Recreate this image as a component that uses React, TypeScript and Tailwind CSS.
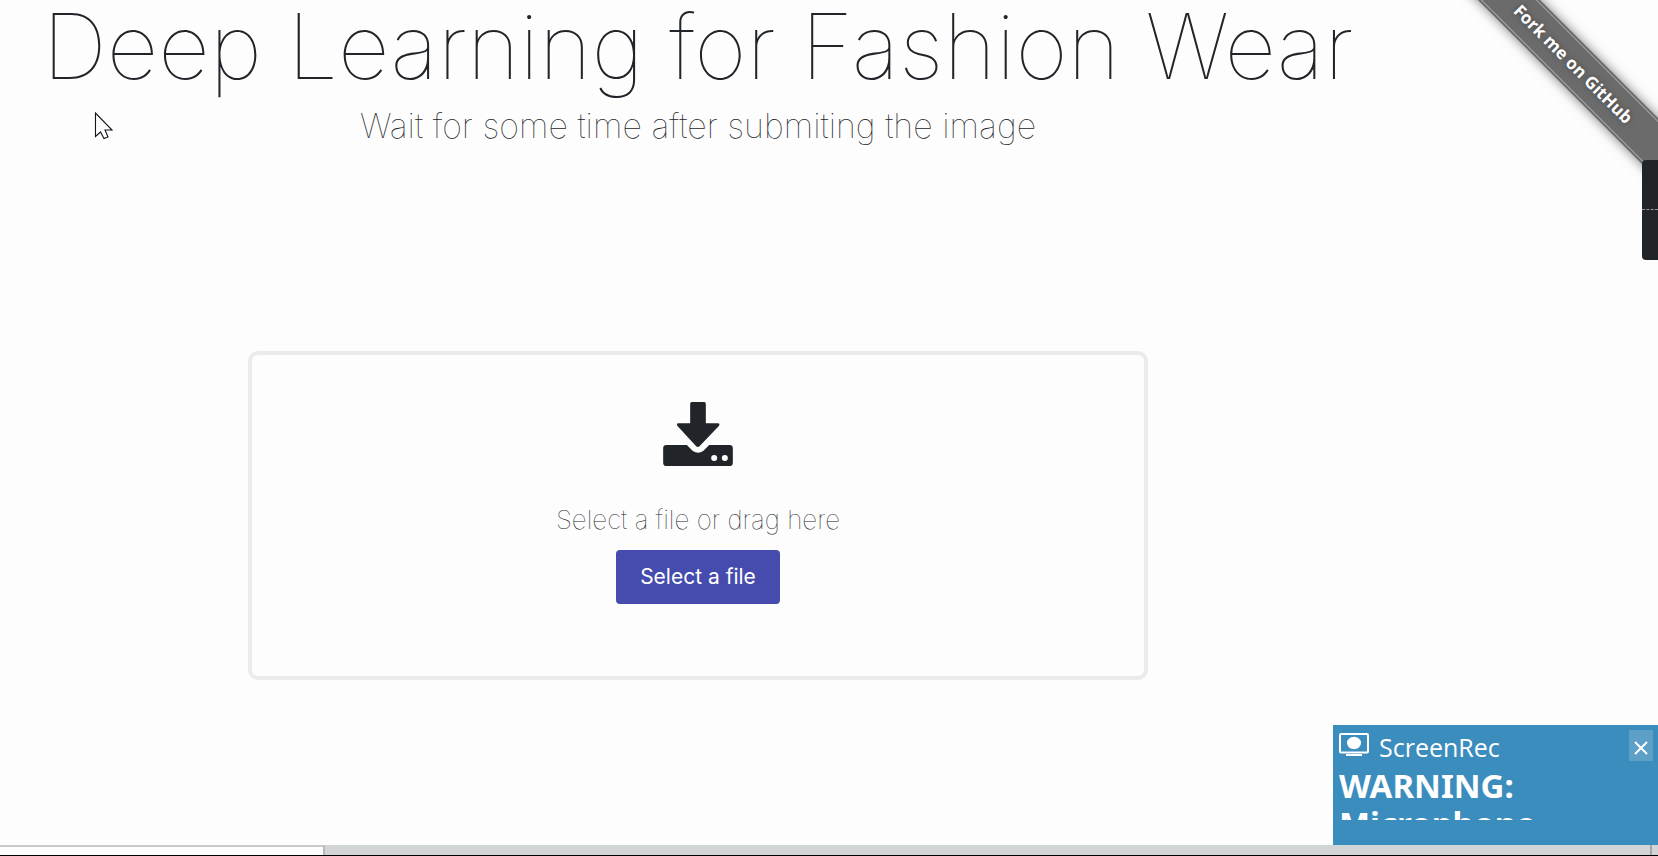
import { useRef } from "react";

function DownloadIcon() {
  return (
    <svg viewBox="0 0 209 192" className="h-16 w-[70px]" fill="#212529" aria-hidden="true">
      <path d="M86 0h37q5 0 5 5v59h36q8 0 3 8l-58 61q-5 4-10 0L43 72q-5-8 3-8h35V5q0-5 5-5z" />
      <path
        fillRule="evenodd"
        d="M10 129h61l18 18q16 11 31 0l18-18h61q10 0 10 10v43q0 10-10 10H10q-10 0-10-10v-43q0-10 10-10zM153 159a9 9 0 1 0 0 18a9 9 0 1 0 0-18zM185 159a9 9 0 1 0 0 18a9 9 0 1 0 0-18z"
      />
    </svg>
  );
}

function Uploader() {
  const fileRef = useRef<HTMLInputElement>(null);
  return (
    <form className="mt-[205px] flex h-[329px] w-full max-w-[900px] flex-col items-center rounded-[10px] border-4 border-[#ebebeb] pt-[47px]">
      <DownloadIcon />
      <label htmlFor="file" className="mt-9 text-[26px] leading-9 font-thin text-[#212529]">
        Select a file or drag here
      </label>
      <input id="file" ref={fileRef} type="file" className="hidden" />
      <button
        type="button"
        onClick={() => fileRef.current?.click()}
        className="mt-3 h-[54px] rounded bg-[#454cad] px-6 text-[21px] text-white"
      >
        Select a file
      </button>
    </form>
  );
}

function Ribbon() {
  return (
    <div className="pointer-events-none absolute top-0 right-0 h-60 w-60 overflow-hidden">
      <a
        href="#github"
        className="pointer-events-auto absolute top-[52px] left-[15px] flex h-11 w-[300px] rotate-45 flex-col justify-center bg-[#6b6b6b] py-0.5 shadow-[0_0_12px_rgba(0,0,0,0.5)]"
      >
        <span className="flex h-full items-center justify-center border-y border-[#a5a5a5] pr-7 font-['Open_Sans',sans-serif] text-[17px] font-bold text-white [text-shadow:0_0_5px_#444]">
          Fork me on GitHub
        </span>
      </a>
    </div>
  );
}

function Notification() {
  return (
    <aside className="absolute right-0 bottom-[11px] h-[120px] w-[325px] bg-[#3b8dbd] pl-1.5 font-['Noto_Sans',sans-serif] text-white">
      <div className="flex h-[42px] items-start">
        <svg viewBox="0 0 30 24" className="mt-2 h-6 w-[30px]" aria-hidden="true">
          <rect x="1" y="1" width="28" height="18.5" rx="1" fill="none" stroke="white" strokeWidth="2" />
          <ellipse cx="15" cy="10" rx="7" ry="6.2" fill="white" />
          <path d="M7 22h16" stroke="white" strokeWidth="2" />
        </svg>
        <span className="ml-2.5 font-['Open_Sans',sans-serif] text-[25px] leading-[44px]">ScreenRec</span>
        <button type="button" aria-label="Close" className="mt-[5px] mr-[5px] ml-auto flex h-[31px] w-6 items-center justify-center bg-[#5c9fc7]">
          <svg viewBox="0 0 14 14" className="mt-1 size-3.5" aria-hidden="true">
            <path d="M1 1l12 12M13 1L1 13" stroke="white" strokeWidth="2" />
          </svg>
        </button>
      </div>
      <p className="h-[53px] overflow-hidden text-[33px] leading-[38px] font-bold">
        WARNING:
        <br />
        Microphone
      </p>
    </aside>
  );
}

export default function App() {
  return (
    <div className="relative flex min-h-screen flex-col overflow-hidden bg-[#fdfdfd] font-['Inter',sans-serif]">
      <main className="flex flex-1 flex-col items-center pr-[262px] text-[#212529]">
        <h1 className="text-[90px] leading-[94px] font-thin whitespace-nowrap">Deep Learning for Fashion Wear</h1>
        <p className="mt-3 text-[34px] leading-[40px] font-thin">Wait for some time after submiting the image</p>
        <Uploader />
      </main>

      <footer className="flex h-[11px] border-b border-black bg-[#d1d5d5]">
        <div className="w-[325px] border-t-2 border-r-2 border-t-[#cbc9ce] border-r-[#b8b8bc] bg-[#fdfdfd]" />
        <div className="mr-1.5 ml-auto w-0.5 bg-[#a5a5a8]" />
      </footer>

      <Ribbon />
      <div className="absolute top-40 right-0 flex h-[100px] w-4 flex-col rounded-l bg-[#212529]">
        <div className="h-[50px] border-b border-dashed border-[#9a9a9a]" />
      </div>
      <Notification />

      <svg viewBox="0 0 20 28" className="absolute top-28 left-[94px] h-7 w-5" aria-hidden="true">
        <path d="M1.5 1v23.5l5-4.5 3.5 6.5 4-1.5-3-7h7z" fill="white" stroke="#11151c" strokeWidth="1.1" />
      </svg>
    </div>
  );
}
